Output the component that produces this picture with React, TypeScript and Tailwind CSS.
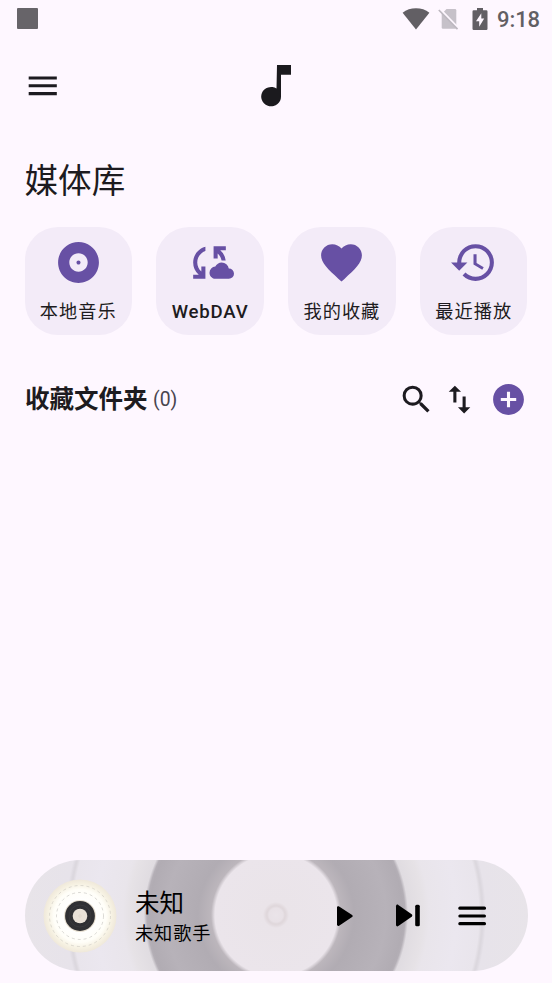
import type { ReactNode } from 'react';
import {
  MdAddCircle,
  MdAlbum,
  MdCloudSync,
  MdFavorite,
  MdHistory,
  MdMenu,
  MdSearch,
  MdSwapVert,
} from 'react-icons/md';

function StatusBar() {
  return (
    <div className="flex h-[37px] items-center justify-between pr-3 pl-[17px]">
      <div className="h-[21px] w-[21px] rounded-[1px] bg-[#676469]" />
      <div className="flex items-center text-[#625f64]">
        <svg className="h-[22px] w-[28px]" viewBox="0 0 28 22" fill="currentColor">
          <path d="M14 21.5 .6 4.700C4.300 1.800 9 .3 14 .3s9.700 1.500 13.400 4.400z" />
        </svg>
        <svg className="ml-[8px] h-[22px] w-[21px]" viewBox="0 0 21 22">
          <path d="M8.500 1h8.500q1.300 0 1.300 1.300v17.200q0 1.300-1.300 1.300H5q-1.300 0-1.300-1.300V6z" fill="#c6c1c9" />
          <path d="M1.800 1.200 21 21" stroke="#fef7ff" strokeWidth="2.500" />
          <path d="M.8 2 19.500 21.200" stroke="#bdb8c0" strokeWidth="1.700" />
        </svg>
        <svg className="ml-[12.5px] h-[22px] w-[16px]" viewBox="0 0 16 22">
          <path d="M5 0h6v2.300h3.300q1.200 0 1.200 1.200v17.200q0 1.200-1.200 1.200H1.700q-1.200 0-1.200-1.200V3.500q0-1.200 1.200-1.200H5z" fill="currentColor" />
          <path d="M9.300 5.200 4 13.200h3.200v5.600l5-8.200H9.300z" fill="#fef7ff" />
        </svg>
        <span className="ml-[9.5px] pt-[3px] font-[Roboto] text-[22px] leading-[26px] font-medium tracking-[-0.1px]">9:18</span>
      </div>
    </div>
  );
}

function Tile({ icon, label, latin = false }: { icon: ReactNode; label: string; latin?: boolean }) {
  return (
    <button className="flex h-[108px] w-[107.5px] flex-col items-center rounded-[33px] bg-[#f3ebf8] pt-[11px] text-[#6750a4]">
      {icon}
      <span
        className={
          latin
            ? 'mt-[12px] text-[18.6px] leading-[26px] font-medium tracking-[0.8px] text-[#1d1b20]'
            : 'mt-[12px] text-[18.2px] leading-[26px] tracking-[1px] text-[#1d1b20]'
        }
      >
        {label}
      </span>
    </button>
  );
}

function Record() {
  return (
    <svg className="h-[76px] w-[76px]" viewBox="-38 -38 76 76">
      <defs>
        <radialGradient id="plate">
          <stop offset="0.4" stopColor="#fff" />
          <stop offset="0.72" stopColor="#fffef8" />
          <stop offset="0.88" stopColor="#f6f1e2" />
          <stop offset="1" stopColor="#efe8da" />
        </radialGradient>
      </defs>
      <circle r="36.500" fill="url(#plate)" />
      <circle r="30.500" fill="none" stroke="#c9c6bd" strokeWidth="0.600" strokeDasharray="3 3" />
      <circle r="23.500" fill="none" stroke="#c2c1bc" strokeWidth="0.600" strokeDasharray="3 3" />
      <circle r="16" fill="#e9e1d2" />
      <circle r="14.900" fill="#303033" />
      <circle r="11" fill="none" stroke="#39393c" strokeWidth="1" />
      <circle r="7.300" fill="#e9e1d6" />
      <circle r="1.300" fill="none" stroke="#dcd3c6" strokeWidth="0.600" />
    </svg>
  );
}

function Player() {
  return (
    <div className="mx-auto flex h-[111px] w-[503px] items-center overflow-hidden rounded-full bg-[radial-gradient(circle_at_251px_55px,#eae4e9_0px,#e8e1e6_7px,#dfd7db_9px,#e1d9dd_10px,#eae4e9_13px,#ebe5eb_61px,#bcb6bc_65px,#b1acb3_78px,#b7b2b9_110px,#b1acb3_127px,#b4afb6_129px,#e0dce1_132px,#e6e2e6_147px,#e9e5eb_153px,#ebe7ef_180px,#e9e5ec_203px,#dcd8de_206px,#dcd8df_207px,#e7e3ea_210px,#e8e4e9_255px)] pl-[17px] text-black">
      <Record />
      <div className="ml-[17.5px] flex w-[193.5px] flex-col pt-[4px]">
        <span className="text-[24.500px] leading-[31px]">未知</span>
        <span className="text-[18.200px] leading-[29px] tracking-[0.9px]">未知歌手</span>
      </div>
      <svg className="ml-[7px] h-[22px] w-[18px]" viewBox="0 0 18 22" fill="currentColor">
        <path d="M1 2.400v17.200c0 1.100 1.200 1.700 2.100 1.100l13-8.700c.8-.5.8-1.500 0-2.100l-13-8.500C2.200.8 1 1.300 1 2.400z" />
      </svg>
      <svg className="ml-[41px] h-[23px] w-[26px]" viewBox="0 0 26 23" fill="currentColor">
        <path d="M1 2.200v18.600c0 1.300 1.300 2 2.300 1.300l13.400-9.400c.8-.6.8-1.800 0-2.400L3.300.900C2.300.200 1 .900 1 2.200z" />
        <rect x="20.200" y="0.700" width="4.600" height="21.600" rx="1.500" />
      </svg>
      <svg className="ml-[37px] h-[20px] w-[28px]" viewBox="0 0 28 20" fill="currentColor">
        <rect x="0.300" y="0.500" width="27.700" height="3.200" rx="1.500" />
        <rect x="0.300" y="8.400" width="27.700" height="3.200" rx="1.500" />
        <rect x="0.300" y="16.100" width="27.700" height="3.200" rx="1.500" />
      </svg>
    </div>
  );
}

export default function App() {
  return (
    <div className="flex h-[983px] w-[552px] flex-col bg-[#fef7ff] font-[Roboto,'Noto_Sans_CJK_SC',sans-serif] text-[#1d1b20]">
      <StatusBar />
      <header className="grid h-[98px] grid-cols-3 items-center px-6">
        <MdMenu size={37.5} />
        <svg className="h-[44px] w-[32px] justify-self-center" viewBox="0 0 32 44" fill="#1b1a1e">
          <path d="M17 1h14v9.800H21v21.700A9.900 9.700 0 1 1 16.500 24.500z" />
        </svg>
      </header>
      <h1 className="mt-[22px] pl-[24.5px] text-[33.6px] leading-[50px]">媒体库</h1>
      <div className="mt-[20px] flex justify-between px-[24.5px]">
        <Tile icon={<MdAlbum size={49} />} label="本地音乐" />
        <Tile icon={<MdCloudSync size={49} className="mr-px" />} label="WebDAV" latin />
        <Tile icon={<MdFavorite size={49} />} label="我的收藏" />
        <Tile icon={<MdHistory size={49} />} label="最近播放" />
      </div>
      <div className="mt-[40px] flex h-[49px] items-center pr-[25px] pl-[25px]">
        <h2 className="text-[24.5px] leading-[34px] font-bold">收藏文件夹</h2>
        <span className="ml-[5.5px] text-[19.4px] leading-[26px] text-[#49454f]">(0)</span>
        <div className="ml-auto flex items-center">
          <MdSearch size={37} />
          <MdSwapVert size={37} className="ml-[6px]" />
          <MdAddCircle size={37} className="ml-[12px] text-[#6750a4]" />
        </div>
      </div>
      <div className="mt-auto mb-3">
        <Player />
      </div>
    </div>
  );
}
